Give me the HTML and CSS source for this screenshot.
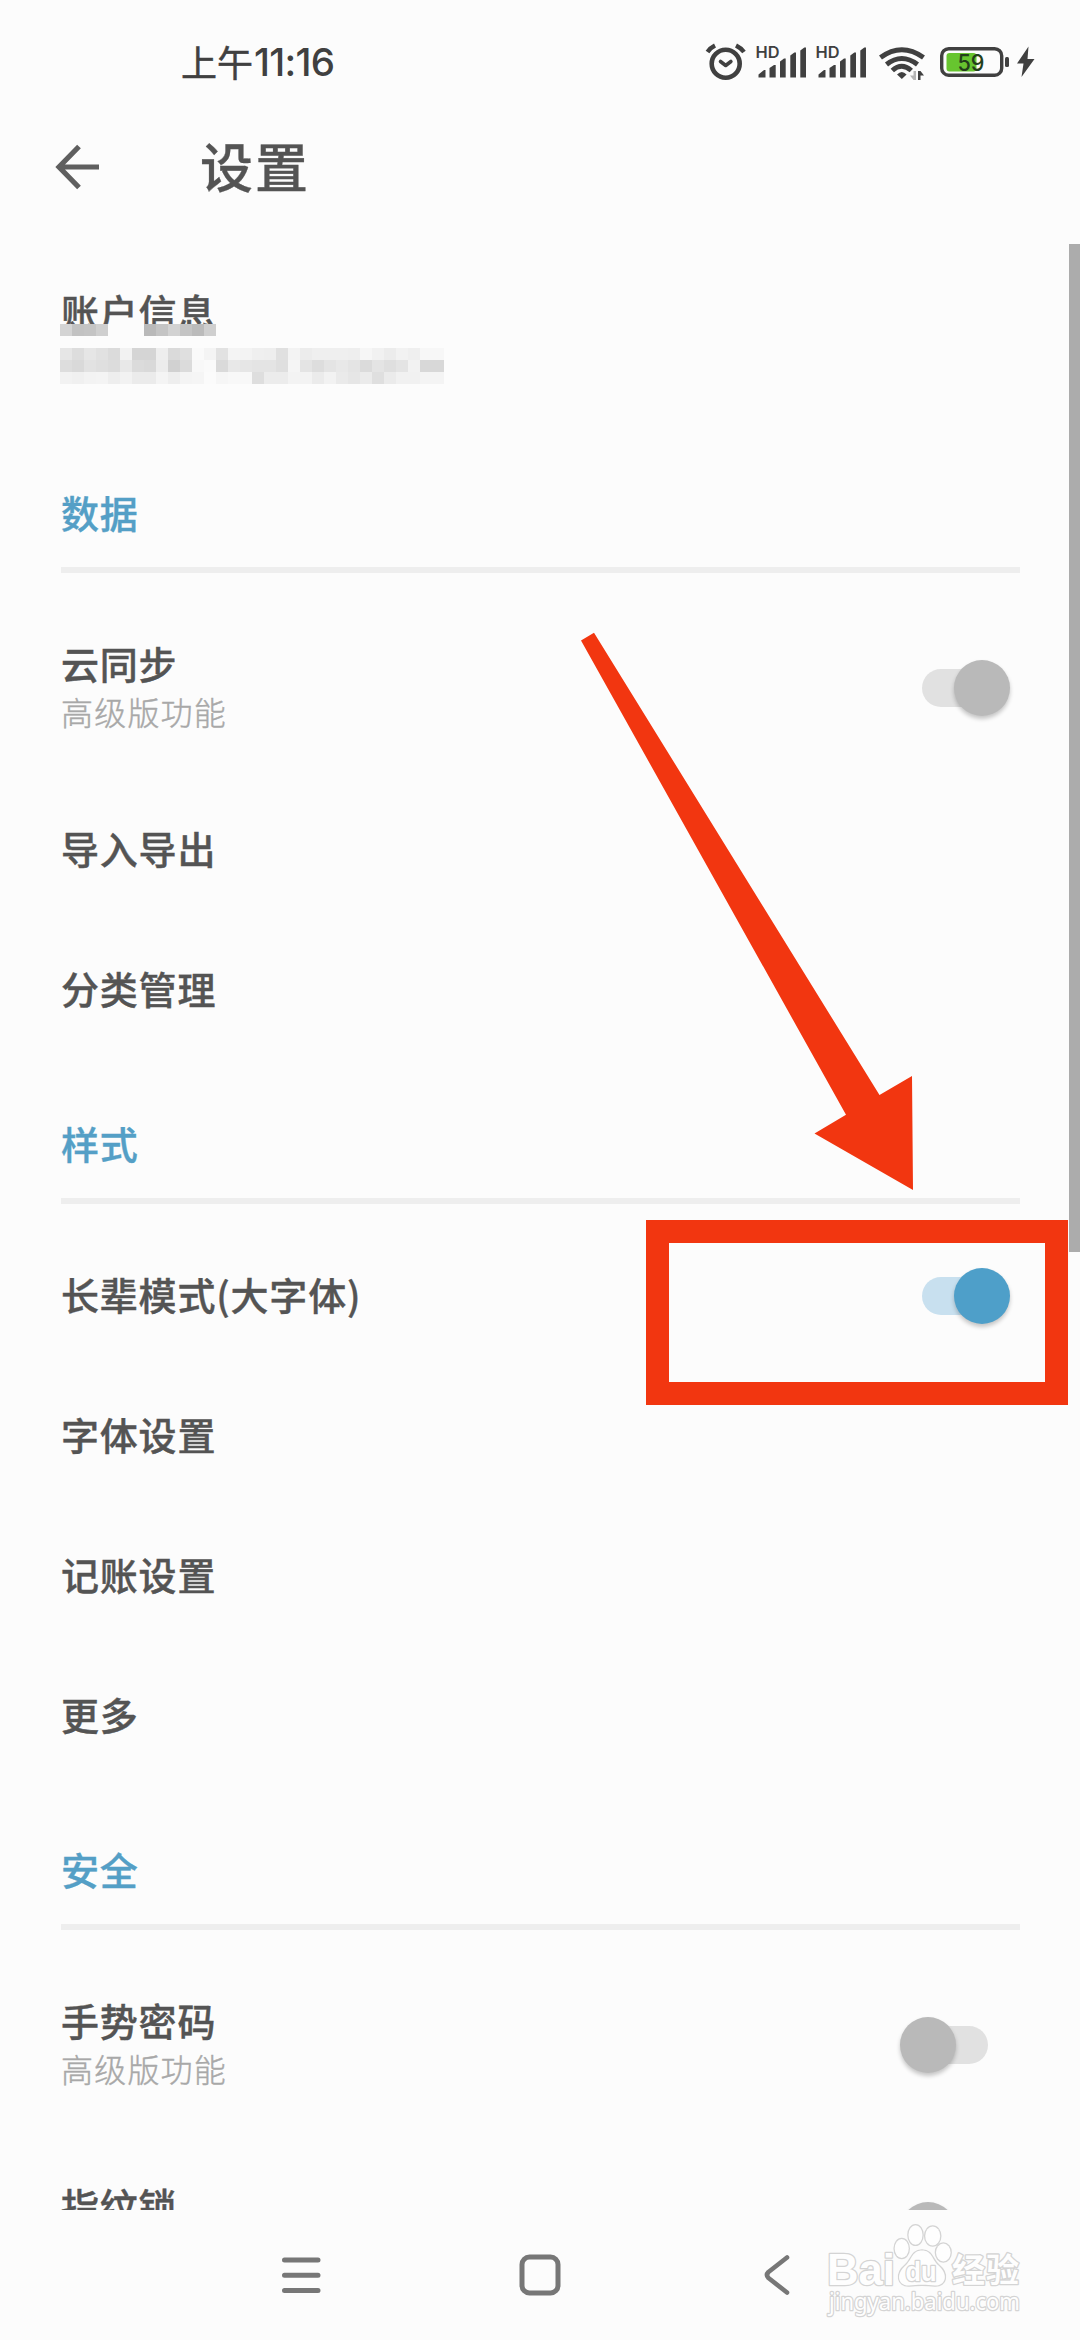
FILE: index.html
```html
<!DOCTYPE html>
<html lang="zh-CN">
<head>
<meta charset="utf-8">
<title>设置</title>
<link rel="stylesheet" href="styles.css">
</head>
<body>
<div class="screen">
  <header class="status">
    <div class="clock"><span>上午</span><span class="digits">11:16</span></div>
    <svg class="status-icons" viewBox="700 36 340 52" width="340" height="52">
      <g fill="none" stroke="#404040" stroke-width="4.6" stroke-linecap="round" stroke-linejoin="round">
        <circle cx="725.7" cy="63.7" r="14"/>
        <path d="M720.5 61.5l5.2 4l5.2-4" stroke-width="3.6"/>
        <path d="M707.500 52q2.500-4 7.500-6.500M736 45.500q5 2.500 8 6.500" stroke-width="4.400" stroke-linecap="butt"/>
      </g>
      <g id="sim" fill="#404040">
        <text class="hd" x="755.500" y="58.200" textLength="24" lengthAdjust="spacingAndGlyphs">HD</text>
        <path d="M758.5 77.500v-3l5.500-4.500h1.500v7.500zM769.500 77.500v-9.500l4.500-3h1.700v12.500zM780 77.500v-16l4-3h1.700v19zM790.300 77.500v-22l4-3h1.700v25zM800.300 77.500v-27l4-3h1.700v30z"/>
      </g>
      <use href="#sim" x="60"/>
      <g fill="none" stroke="#404040" stroke-width="5">
        <path d="M880.500 57.500Q901.700 42 923.500 57.500"/>
        <path d="M886.500 64.500Q901.700 52.500 917.500 64.500"/>
        <path d="M892.300 70.500Q901.700 62 911.300 70.500"/>
      </g>
      <path d="M897 74.500q4.800-5 9.600 0l-4.800 4.500z" fill="#404040"/>
      <path d="M916 71v9h-2.500l-3.500-4.500h3.500v-4.500z" fill="#b5b5b5"/>
      <path d="M918 80v-9h2.500l3.500 4.500h-3.500v4.500z" fill="#404040"/>
      <rect x="946.500" y="53" width="30" height="18.500" rx="3" fill="#67c52f"/>
      <rect x="941.700" y="48.700" width="60" height="26.500" rx="7" fill="none" stroke="#404040" stroke-width="3.400"/>
      <rect x="1005" y="57" width="4" height="10" rx="1.500" fill="#404040"/>
      <text class="level" x="957.500" y="70.500" textLength="27" lengthAdjust="spacingAndGlyphs">59</text>
      <path d="M1028.500 46.500l-11.500 17h6.500l-2 13.500l13-18h-7z" fill="#404040"/>
    </svg>
  </header>
  <div class="appbar">
    <svg class="back" viewBox="0 0 46 46" width="46" height="46"><path d="M24 2.500L4 23l20 20.500M4 23h40" fill="none" stroke="#5f5f5f" stroke-width="5.200"/></svg>
    <h1>设置</h1>
  </div>
  <main class="list">
    <section class="row tall account">
      <div class="label"><b>账户信息</b></div>
      <svg class="mosaic" viewBox="0 0 32 5" width="384" height="60" shape-rendering="crispEdges"></svg>
    </section>
    <h2>数据</h2>
    <section class="row tall"><div class="label"><b>云同步</b><small>高级版功能</small></div><i class="switch right"></i></section>
    <section class="row"><b>导入导出</b></section>
    <section class="row"><b>分类管理</b></section>
    <h2>样式</h2>
    <section class="row"><b>长辈模式(大字体)</b><i class="switch right active"></i></section>
    <section class="row"><b>字体设置</b></section>
    <section class="row"><b>记账设置</b></section>
    <section class="row"><b>更多</b></section>
    <h2>安全</h2>
    <section class="row tall"><div class="label"><b>手势密码</b><small>高级版功能</small></div><i class="switch left"></i></section>
    <section class="row tall"><div class="label"><b>指纹锁</b><small></small></div><i class="switch left"></i></section>
  </main>
  <nav class="navbar">
    <svg viewBox="0 0 44 44" width="44" height="44"><path d="M5.500 7h33.500M5.500 22.300h33.500M5.500 37.600h33.500" fill="none" stroke="#777" stroke-width="5" stroke-linecap="round"/></svg>
    <svg viewBox="0 0 44 44" width="44" height="44"><rect x="4" y="4" width="36" height="36" rx="7.500" fill="none" stroke="#777" stroke-width="5"/></svg>
    <svg viewBox="0 0 44 44" width="44" height="44"><path d="M31 4.500L12.500 19q-3 3 0 6L31 39.500" fill="none" stroke="#777" stroke-width="4.600" stroke-linecap="round" stroke-linejoin="round"/></svg>
  </nav>
  <div class="scrollbar"></div>
  <svg class="arrow" viewBox="580 632 334 559" width="334" height="559"><path d="M581 640.400L594 632.700L879.500 1095L912 1076L913 1190L814.500 1133.500L846 1114.700z" fill="#f23610"/></svg>
  <div class="highlight"></div>
  <svg class="watermark" viewBox="820 2215 210 110" width="210" height="110">
    <g fill="#fefefe" stroke="#d4d4d4" stroke-width="2.600" stroke-linejoin="round" paint-order="stroke">
      <text class="wm-bai" x="827" y="2284.500" textLength="68" lengthAdjust="spacingAndGlyphs">Bai</text>
      <ellipse cx="901.700" cy="2248.500" rx="7" ry="9.500"/>
      <ellipse cx="915.500" cy="2235" rx="7" ry="9.800"/>
      <ellipse cx="932.700" cy="2236" rx="7.500" ry="9.500"/>
      <ellipse cx="943.300" cy="2252.500" rx="7.300" ry="9"/>
      <path d="M922 2250.500c-10 0-10 9-16 14.500c-11 9-8 21 3 20.500c8-1 18-1 26 0c11 .5 14-11.500 3-20.500c-6-5.500-6-14.500-16-14.500z"/>
      <text class="wm-du" x="905.500" y="2280.500" textLength="31" lengthAdjust="spacingAndGlyphs">du</text>
      <text class="wm-cn" x="952" y="2282" textLength="67">经验</text>
      <text class="wm-url" x="829" y="2310" textLength="191" lengthAdjust="spacingAndGlyphs">jingyan.baidu.com</text>
    </g>
  </svg>
</div>
<script src="mosaic.js"></script>
</body>
</html>
```
FILE: styles.css
```css
* { box-sizing: border-box; }
body {
  margin: 0;
  background: #fcfcfc;
  font-family: "Noto Sans CJK SC", sans-serif;
  color: #545454;
}
.screen {
  position: relative;
  width: 1080px;
  height: 2340px;
  overflow: hidden;
  display: flex;
  flex-direction: column;
}
.status {
  height: 124px;
  padding: 0 40px 0 181px;
  display: flex;
  align-items: center;
  justify-content: space-between;
}
.clock {
  display: flex;
  align-items: center;
  padding-bottom: 3px;
  font-size: 36px;
  line-height: 48px;
  font-weight: 400;
  color: #404040;
  -webkit-text-stroke: .5px #404040;
}
.digits { padding: 2px 0 0 1px; font-family: Inter, sans-serif; font-size: 38.5px; letter-spacing: -.7px; font-weight: 500; -webkit-text-stroke-width: 0; }
.hd { font: 600 16px Inter, sans-serif; }
.level { font: 500 23px Inter, sans-serif; fill: #23401a; }
.appbar {
  height: 120px;
  padding: 0 55px 34px;
  display: flex;
  align-items: center;
}
.back { margin-right: 99px; }
h1 { margin: 0; padding-bottom: 5px; font-size: 53px; line-height: 60px; font-weight: 500; letter-spacing: 2px; -webkit-text-stroke: .3px; }
.list { height: 1966px; overflow: hidden; flex: none; padding: 0 60px 0 61px; }
.row { height: 140px; display: flex; align-items: center; justify-content: space-between; }
.row b { padding-bottom: 5px; font-size: 38px; line-height: 47px; font-weight: 500; letter-spacing: .8px; -webkit-text-stroke: .4px; }
.tall { height: 185px; }
.label { display: flex; flex-direction: column; padding-bottom: 2px; }
.row .label b { padding-bottom: 3px; }
small { height: 46px; font-size: 32px; line-height: 45px; font-weight: 300; letter-spacing: 1.2px; color: #a8a8a8; -webkit-text-stroke: .4px; }
.account { position: relative; }
.account .label { padding-bottom: 49px; }
.mosaic { position: absolute; left: -1px; top: 80px; }
h2 {
  margin: 0 0 22px;
  height: 144px;
  padding-top: 58px;
  border-bottom: 6px solid #eee;
  font-size: 38px;
  line-height: 50px;
  font-weight: 500;
  letter-spacing: .8px;
  color: #549fc6;
  -webkit-text-stroke: .4px;
}
.switch {
  width: 66px;
  height: 38px;
  border-radius: 19px;
  background: #e1e1e1;
  display: flex;
  align-items: center;
}
.switch::after {
  content: "";
  flex: none;
  width: 56px;
  height: 56px;
  border-radius: 50%;
  background: #b9b9b9;
  box-shadow: 0 3px 4px rgba(0, 0, 0, .22);
}
.right { margin-right: 32px; }
.right::after { margin-left: 32px; }
.left { margin-right: 32px; }
.left::after { margin-left: -22px; }
.active { background: #c8e0ef; }
.active::after { background: #4e9fc9; }
.navbar {
  height: 130px;
  padding: 0 280px 0 279px;
  display: flex;
  align-items: center;
  justify-content: space-between;
}
.scrollbar { position: absolute; right: 0; top: 244px; width: 11px; height: 1008px; background: #acacac; }
.arrow { position: absolute; left: 580px; top: 632px; }
.highlight { position: absolute; left: 646px; top: 1220px; width: 422px; height: 185px; border: 23px solid #f23610; }
.watermark { position: absolute; left: 820px; top: 2215px; }
.wm-bai { font: 700 45px "Liberation Sans", sans-serif; }
.wm-du { font: 700 28px "Liberation Sans", sans-serif; }
.wm-cn { font: 700 33px "Noto Sans CJK SC", sans-serif; }
.wm-url { font: 400 24px "Noto Sans", sans-serif; }
```
FILE: mosaic.js
```js
// Grey levels of the pixelated account line, one hex pair per 12px cell.
const rows = [
  "d4c2c4cffcfcfcb9c4d2c4bbcf",
  "",
  "e6dde6e1dbf2d5d5eedadffaf4e2f4f3efeee0f3ecefefefeef6f1ecf2eff7f7",
  "ddd9e2dfdce8dbd9ecd1dbf8fadae8e6e4e4dff5e4dde4e8e4dbe4dfe4f2d8d8",
  "f2f0f3f4eef2ebebf4eef4f5fbf6f8f8deececf3f3ebf2eae6ebdfebf1f1f4f4"
];
const svg = document.querySelector(".mosaic");
rows.forEach((row, y) => {
  (row.match(/../g) || []).forEach((g, x) => {
    const r = document.createElementNS("http://www.w3.org/2000/svg", "rect");
    r.setAttribute("x", x);
    r.setAttribute("y", y);
    r.setAttribute("width", 1);
    r.setAttribute("height", 1);
    r.setAttribute("fill", "#" + g + g + g);
    svg.append(r);
  });
});
```
